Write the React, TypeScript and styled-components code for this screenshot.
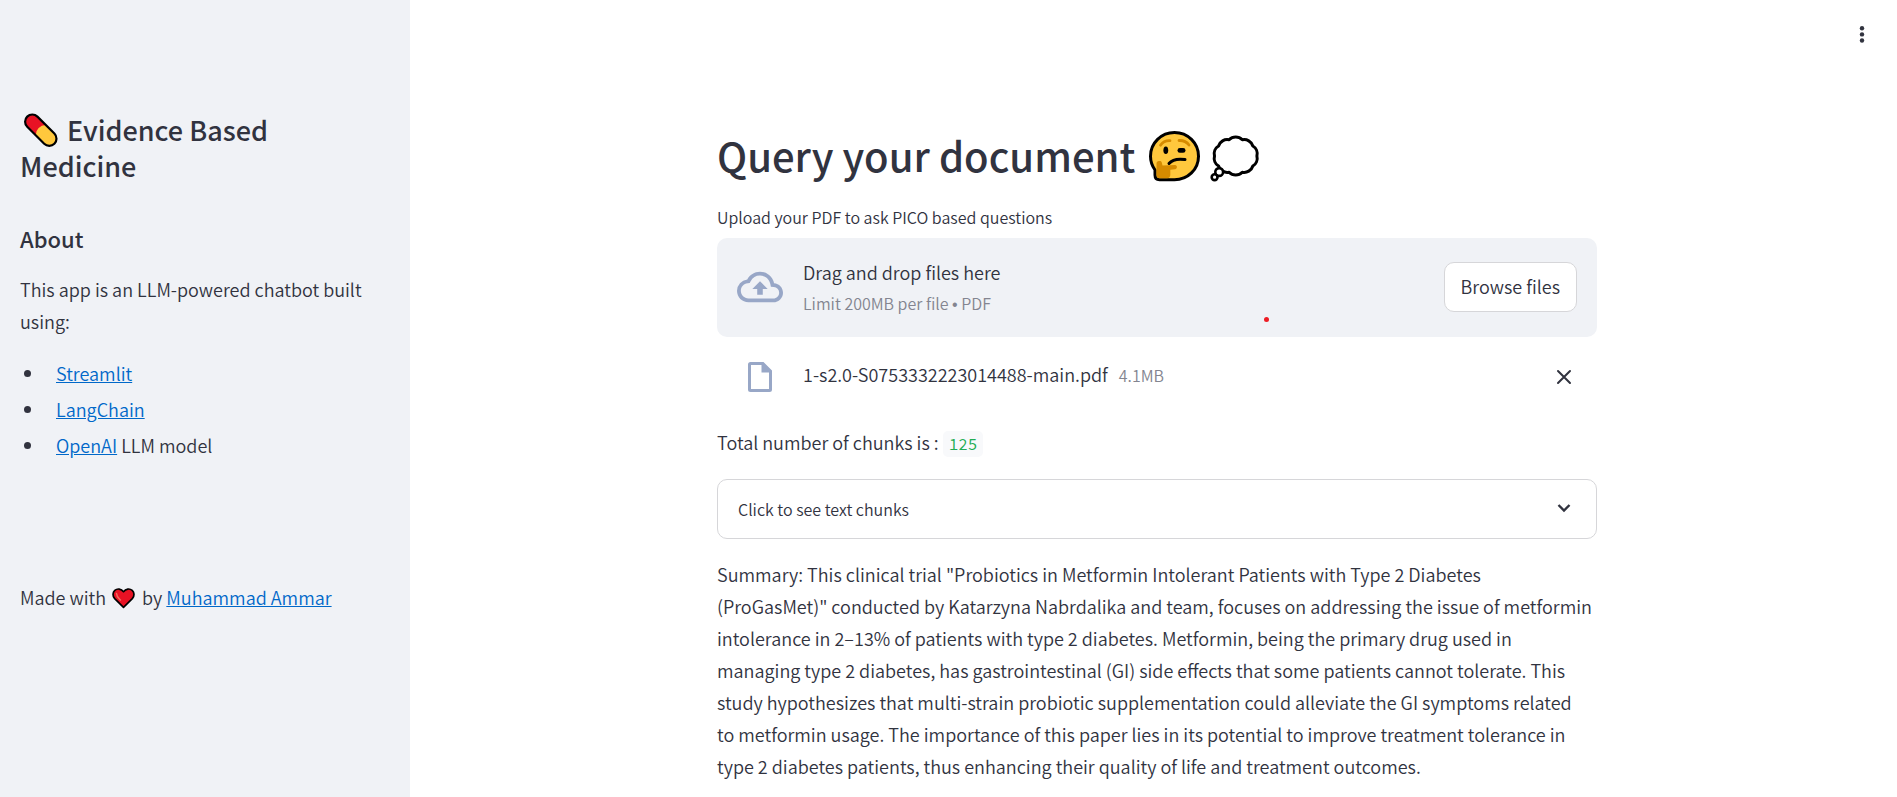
import React from "react";
import styled, { createGlobalStyle } from "styled-components";

const ink = "#31333f";
const muted = "#838590";
const panel = "#f0f2f6";
const iconBlue = "#98a7c7";
const line = "#d6d6d9";

const GlobalStyle = createGlobalStyle`
  *, *::before, *::after { box-sizing: border-box; }
  body {
    margin: 0;
    background: #ffffff;
    color: ${ink};
    font-family: "Source Sans Pro", "Noto Sans CJK SC", sans-serif;
    font-size: 18px;
    font-weight: 350;
    line-height: 32px;
  }
  h1, h2, h3, p, ul { margin: 0; padding: 0; }
  button { font: inherit; color: inherit; cursor: pointer; }
`;

const Shell = styled.div`
  display: flex;
  align-items: stretch;
  min-height: 100vh;
`;

const Sidebar = styled.aside`
  flex: 0 0 410px;
  padding: 112px 20px 24px;
  background: ${panel};
`;

const SidebarTitle = styled.h2`
  font-size: 27px;
  line-height: 36px;
  font-weight: 500;
`;

const SidebarHeading = styled.h3`
  margin-top: 41px;
  font-size: 22px;
  line-height: 26px;
  font-weight: 500;
`;

const SidebarText = styled.p<{ $gap: number }>`
  margin-top: ${(p) => p.$gap}px;
`;

const LinkList = styled.ul`
  margin-top: 20px;
  padding-left: 4px;
  display: flex;
  flex-direction: column;
  gap: 4px;
  list-style: none;
`;

const LinkItem = styled.li`
  &::before {
    content: "";
    display: inline-block;
    width: 7px;
    height: 7px;
    margin-right: 25px;
    border-radius: 50%;
    background: ${ink};
    vertical-align: 4px;
  }
`;

const Link = styled.a`
  color: #0068c9;
  text-decoration: underline;
`;

const Emoji = styled.svg<{ $drop: number; $left: number; $right: number }>`
  display: inline-block;
  overflow: visible;
  vertical-align: -${(p) => p.$drop}px;
  margin: 0 ${(p) => p.$right}px 0 ${(p) => p.$left}px;
`;

const Main = styled.main`
  flex: 1;
  min-width: 0;
  display: flex;
  flex-direction: column;
`;

const Toolbar = styled.header`
  display: flex;
  justify-content: flex-end;
  padding: 20px 20px 0;
  height: 60px;
`;

const IconButton = styled.button`
  display: flex;
  align-items: center;
  justify-content: center;
  width: 30px;
  height: 30px;
  padding: 0;
  border: 0;
  background: none;
`;

const Content = styled.div`
  width: 100%;
  max-width: 919px;
  margin: 0 auto;
  padding: 71px 16px 12px 23px;
`;

const Title = styled.h1`
  font-size: 40px;
  line-height: 48px;
  font-weight: 500;
  white-space: nowrap;
`;

const UploadLabel = styled.label`
  display: block;
  margin: 23px 0 9px;
  font-size: 16px;
  line-height: 24px;
`;

const Dropzone = styled.section`
  position: relative;
  display: flex;
  align-items: center;
  min-height: 99px;
  padding: 15px 20px 17px;
  border-radius: 10px;
  background: ${panel};
`;

const HiddenInput = styled.input`
  display: none;
`;

const DropText = styled.div`
  flex: 1;
  margin-left: 20px;
`;

const DropTitle = styled.p`
  margin-bottom: 3px;
`;

const Small = styled.span`
  font-size: 16px;
  line-height: 24px;
  color: ${muted};
`;

const DropHint = styled(Small)`
  display: block;
`;

const Bullet = styled.span`
  font-family: "Liberation Sans", sans-serif;
`;

const BrowseButton = styled.button`
  height: 50px;
  padding: 0 16px 2px;
  border: 1px solid ${line};
  border-radius: 10px;
  background: #ffffff;
`;

const Pointer = styled.span`
  position: absolute;
  right: 328px;
  bottom: 15px;
  width: 5px;
  height: 5px;
  border-radius: 50%;
  background: #ed1c24;
`;

const FileRow = styled.div`
  display: flex;
  align-items: center;
  padding: 0 18px 0 31px;
  margin-top: 21px;
`;

const FileMeta = styled.div`
  flex: 1;
  display: flex;
  align-items: baseline;
  gap: 11px;
  margin-left: 31px;
  padding-bottom: 6px;
`;

const Chunks = styled.p`
  margin-top: 30px;
`;

const Count = styled.code`
  margin-left: 4px;
  padding: 3px 6px;
  border-radius: 5px;
  background: #f8f9fb;
  color: #21ac53;
  font-family: "Source Code Pro", "Noto Sans CJK SC", monospace;
  font-size: 16px;
  font-weight: 400;
  line-height: 24px;
`;

const Expander = styled.button`
  display: flex;
  align-items: center;
  justify-content: space-between;
  width: 100%;
  height: 60px;
  margin: 21px 0 19px;
  padding: 0 24px 1px 20px;
  border: 1px solid ${line};
  border-radius: 10px;
  background: #ffffff;
  font-size: 16px;
  line-height: 24px;
  text-align: left;
`;

const Summary = styled.p`
  padding-right: 4px;
`;

const Pill = () => (
  <Emoji $drop={7} $left={2} $right={3} width="36" height="36" viewBox="0 0 36 36" role="img" aria-label="pill">
    <g transform="translate(18.800 18.200) rotate(45)">
      <rect x="-19.200" y="-7.200" width="38.400" height="14.400" rx="7.200" fill="#e81224" />
      <path d="M0 -7.200H12a7.200 7.200 0 0 1 0 14.400H0a10 10 0 0 1 0-14.400z" fill="#ffc83d" />
      <rect x="-19.200" y="-7.200" width="38.400" height="14.400" rx="7.200" fill="none" stroke="#000" strokeWidth="2.200" />
    </g>
  </Emoji>
);

const Heart = () => (
  <Emoji $drop={4} $left={2} $right={3} width="23" height="21" viewBox="0 0 23 21" role="img" aria-label="love">
    <path d="M11.500 19.300 2.700 10.600C.300 8.100.600 4.300 2.800 2.400 5.300.200 9.200.600 11.500 3.700 13.800.600 17.700.200 20.200 2.400c2.200 1.900 2.500 5.700.100 8.200z" fill="#e81224" stroke="#000" strokeWidth="1.700" strokeLinejoin="round" />
    <path d="M4.500 5.500c0 3 1.800 4.300 4 6.500" fill="none" stroke="#f4695f" strokeWidth="1.500" strokeLinecap="round" />
  </Emoji>
);

const Thinking = () => (
  <Emoji $drop={10} $left={5} $right={10} width="51" height="51" viewBox="0 0 51 51" role="img" aria-label="thinking face">
    <path d="M25.500 1.500C38.800 1.500 49.500 12 49.500 25.200S38.800 48.700 25.500 48.700H10.500C7.500 48.700 6 46.800 6 44V39C3.200 35 1.500 30.500 1.500 25.200 1.500 12 12.300 1.500 25.500 1.500z" fill="#ffc83d" stroke="#000" strokeWidth="3" strokeLinejoin="round" />
    <path d="M7.500 32.500c0-1.500 1-2.300 2.500-2.500.800-.200 2.500 0 2.700 1.200l.800 3.200 12.500-.400c2.600 0 2.600 4 0 4.200l-4.700.600v5.200c0 2-1.300 3.200-3.200 3.200H11c-2.200 0-3.500-1.300-3.500-3.200z" fill="#d68b00" />
    <path d="M11.500 14.200c2-3 5.500-4.700 9.500-4.500M30 9.500c4.200-.200 7.800 1.500 10 4.500" fill="none" stroke="#d68b00" strokeWidth="2.800" strokeLinecap="round" />
    <ellipse cx="16.800" cy="19.300" rx="2.400" ry="3.800" />
    <rect x="28.500" y="17" width="8" height="4.800" rx="2.400" />
    <path d="M20 32.500c3.200-4 9-5 16-4" fill="none" stroke="#000" strokeWidth="3" strokeLinecap="round" />
  </Emoji>
);

const scallops = 10;
const edge = (i: number) => {
  const a = ((-90 - 18 + 36 * i) * Math.PI) / 180;
  return `${(25.7 + 21.2 * Math.cos(a)).toFixed(2)} ${(20 + 17 * Math.sin(a)).toFixed(2)}`;
};
const cloudPath =
  `M${edge(0)}` +
  Array.from({ length: scallops }, (_, i) => `A9 9 0 0 1 ${edge(i + 1)}`).join("") +
  "z";

const Thought = () => (
  <Emoji $drop={10} $left={0} $right={0} width="50" height="46" viewBox="0 0 50 46" role="img" aria-label="thought">
    <g fill="#fff" stroke="#000">
      <path d={cloudPath} strokeWidth="3" strokeLinejoin="round" />
      <circle cx="9.200" cy="36" r="3.900" strokeWidth="2.600" />
      <circle cx="4.600" cy="41.200" r="2.900" strokeWidth="2.600" />
    </g>
  </Emoji>
);

export default function App() {
  return (
    <>
      <GlobalStyle />
      <Shell>
        <Sidebar>
          <SidebarTitle><Pill /> Evidence Based Medicine</SidebarTitle>
          <SidebarHeading>About</SidebarHeading>
          <SidebarText $gap={22}>This app is an LLM-powered chatbot built using:</SidebarText>
          <LinkList>
            <LinkItem><Link href="#streamlit">Streamlit</Link></LinkItem>
            <LinkItem><Link href="#langchain">LangChain</Link></LinkItem>
            <LinkItem><Link href="#openai">OpenAI</Link> LLM model</LinkItem>
          </LinkList>
          <SidebarText $gap={120}>Made with <Heart /> by <Link href="#author">Muhammad Ammar</Link></SidebarText>
        </Sidebar>
        <Main>
          <Toolbar>
            <IconButton aria-label="Menu">
              <svg width="20" height="20" viewBox="0 0 20 20" fill={ink}>
                <circle cx="10" cy="3.300" r="2.200" /><circle cx="10" cy="9.400" r="2.200" /><circle cx="10" cy="15.500" r="2.200" />
              </svg>
            </IconButton>
          </Toolbar>
          <Content>
            <Title>Query your document <Thinking /><Thought /></Title>
            <UploadLabel htmlFor="pdf">Upload your PDF to ask PICO based questions</UploadLabel>
            <Dropzone>
              <HiddenInput id="pdf" type="file" accept="application/pdf" />
              <svg width="46" height="46" viewBox="0 0 24 24" fill={iconBlue}>
                <path d="M19.350 10.040A7.490 7.490 0 0 0 12 4C9.110 4 6.600 5.640 5.350 8.040A5.994 5.994 0 0 0 0 14c0 3.310 2.690 6 6 6h13c2.760 0 5-2.240 5-5 0-2.640-2.050-4.780-4.650-4.960zM19 18H6c-2.210 0-4-1.790-4-4 0-2.050 1.530-3.760 3.560-3.970l1.070-.110.500-.950A5.469 5.469 0 0 1 12 6c2.620 0 4.880 1.860 5.390 4.430l.300 1.500 1.530.110A2.980 2.980 0 0 1 22 15c0 1.650-1.350 3-3 3zM8 13h2.550v3h2.900v-3H16l-4-4z" />
              </svg>
              <DropText>
                <DropTitle>Drag and drop files here</DropTitle>
                <DropHint>Limit 200MB per file <Bullet>•</Bullet> PDF</DropHint>
              </DropText>
              <BrowseButton>Browse files</BrowseButton>
              <Pointer />
            </Dropzone>
            <FileRow>
              <svg width="24" height="30" viewBox="0 0 24 30" fill={iconBlue}>
                <path fillRule="evenodd" d="M2.500 0H15.500L24 8.500V27.500A2.500 2.500 0 0 1 21.500 30H2.500A2.500 2.500 0 0 1 0 27.500V2.500A2.500 2.500 0 0 1 2.500 0zM3 3v24h18V10.500h-7.500V3z" />
              </svg>
              <FileMeta>
                <span>1-s2.0-S0753332223014488-main.pdf</span>
                <Small>4.1MB</Small>
              </FileMeta>
              <IconButton aria-label="Remove file">
                <svg width="16" height="16" viewBox="0 0 16 16" fill="none" stroke={ink} strokeWidth="2" strokeLinecap="round">
                  <path d="M2 2l12 12M14 2L2 14" />
                </svg>
              </IconButton>
            </FileRow>
            <Chunks>Total number of chunks is :<Count>125</Count></Chunks>
            <Expander aria-expanded="false">
              Click to see text chunks
              <svg width="16" height="16" viewBox="0 0 16 16" fill="none" stroke={ink} strokeWidth="2.400">
                <path d="M2.500 4L8 9.500 13.500 4" />
              </svg>
            </Expander>
            <Summary>
              Summary: This clinical trial "Probiotics in Metformin Intolerant Patients with Type 2 Diabetes (ProGasMet)" conducted by Katarzyna Nabrdalika and team, focuses on addressing the issue of metformin intolerance in 2–13% of patients with type 2 diabetes. Metformin, being the primary drug used in managing type 2 diabetes, has gastrointestinal (GI) side effects that some patients cannot tolerate. This study hypothesizes that multi-strain probiotic supplementation could alleviate the GI symptoms related to&nbsp;metformin usage. The importance of this paper lies in its potential to improve treatment tolerance in type&nbsp;2 diabetes patients, thus enhancing their quality of life and treatment outcomes.
            </Summary>
          </Content>
        </Main>
      </Shell>
    </>
  );
}
